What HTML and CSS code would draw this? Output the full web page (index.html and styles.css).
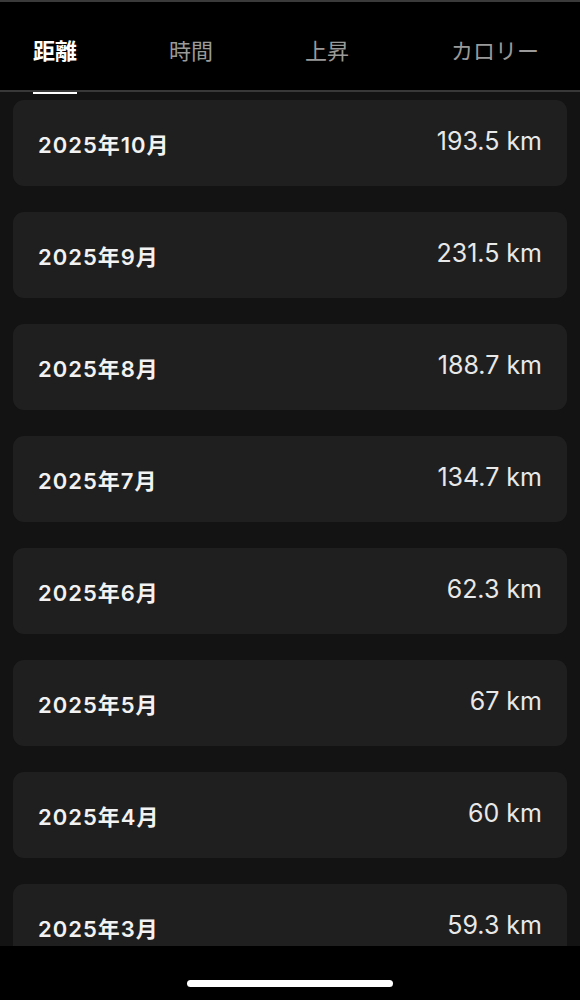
FILE: index.html
```html
<!DOCTYPE html>
<html lang="ja">
<head>
    <meta charset="UTF-8">
    <meta name="viewport" content="width=device-width, initial-scale=1.0">
    <title>月別の記録</title>
    <link rel="stylesheet" href="styles.css">
</head>
<body>
    <div class="screen">
        <div class="tabs">
            <div class="tab active">距離</div>
            <div class="tab">時間</div>
            <div class="tab">上昇</div>
            <div class="tab last">カロリー</div>
        </div>

        <div class="list">
            <div class="row"><span class="month">2025年10月</span><span class="value">193.5 km</span></div>
            <div class="row"><span class="month">2025年9月</span><span class="value">231.5 km</span></div>
            <div class="row"><span class="month">2025年8月</span><span class="value">188.7 km</span></div>
            <div class="row"><span class="month">2025年7月</span><span class="value">134.7 km</span></div>
            <div class="row"><span class="month">2025年6月</span><span class="value">62.3 km</span></div>
            <div class="row"><span class="month">2025年5月</span><span class="value">67 km</span></div>
            <div class="row"><span class="month">2025年4月</span><span class="value">60 km</span></div>
            <div class="row"><span class="month">2025年3月</span><span class="value">59.3 km</span></div>
        </div>

        <div class="home-bar">
            <div class="home-indicator"></div>
        </div>
    </div>
</body>
</html>
```

FILE: styles.css
```css
body {
    margin: 0;
    padding: 0;
    background-color: #000;
    font-family: Inter, "Noto Sans CJK JP", sans-serif;
}

.screen {
    height: 1000px;
    display: flex;
    flex-direction: column;
    background-color: #131313;
    overflow: hidden;
}

.tabs {
    display: flex;
    align-items: center;
    height: 92px;
    padding-left: 33px;
    gap: 92px;
    background-color: #000;
    border-top: 2px solid #3a3a3a;
    border-bottom: 2px solid #383838;
    box-sizing: border-box;
}

.tab {
    position: relative;
    font-size: 22px;
    color: #9a9a9a;
    line-height: 1;
    padding-top: 10px;
}

.tab.active {
    color: #fff;
    font-weight: 700;
}

.tab.active::after {
    content: "";
    position: absolute;
    left: 0;
    right: 0;
    bottom: -32px;
    height: 2px;
    background-color: #fff;
}

.tab.last {
    margin-left: 10px;
}

.list {
    flex: 1;
    overflow: hidden;
    padding: 8px 13px 0;
    display: flex;
    flex-direction: column;
    gap: 26px;
}

.row {
    flex-shrink: 0;
    height: 86px;
    display: flex;
    justify-content: space-between;
    align-items: center;
    padding: 0 25px;
    background-color: #1f1f1f;
    border-radius: 11px;
}

.month {
    font-size: 22px;
    font-weight: 600;
    color: #f2f2f2;
    letter-spacing: 1px;
}

.value {
    font-size: 25px;
    color: #e8e8e8;
    margin-bottom: 4px;
}

.home-bar {
    height: 54px;
    flex-shrink: 0;
    background-color: #000;
    display: flex;
    justify-content: center;
    padding-top: 34px;
    box-sizing: border-box;
}

.home-indicator {
    width: 206px;
    height: 7px;
    border-radius: 4px;
    background-color: #fff;
}
```
